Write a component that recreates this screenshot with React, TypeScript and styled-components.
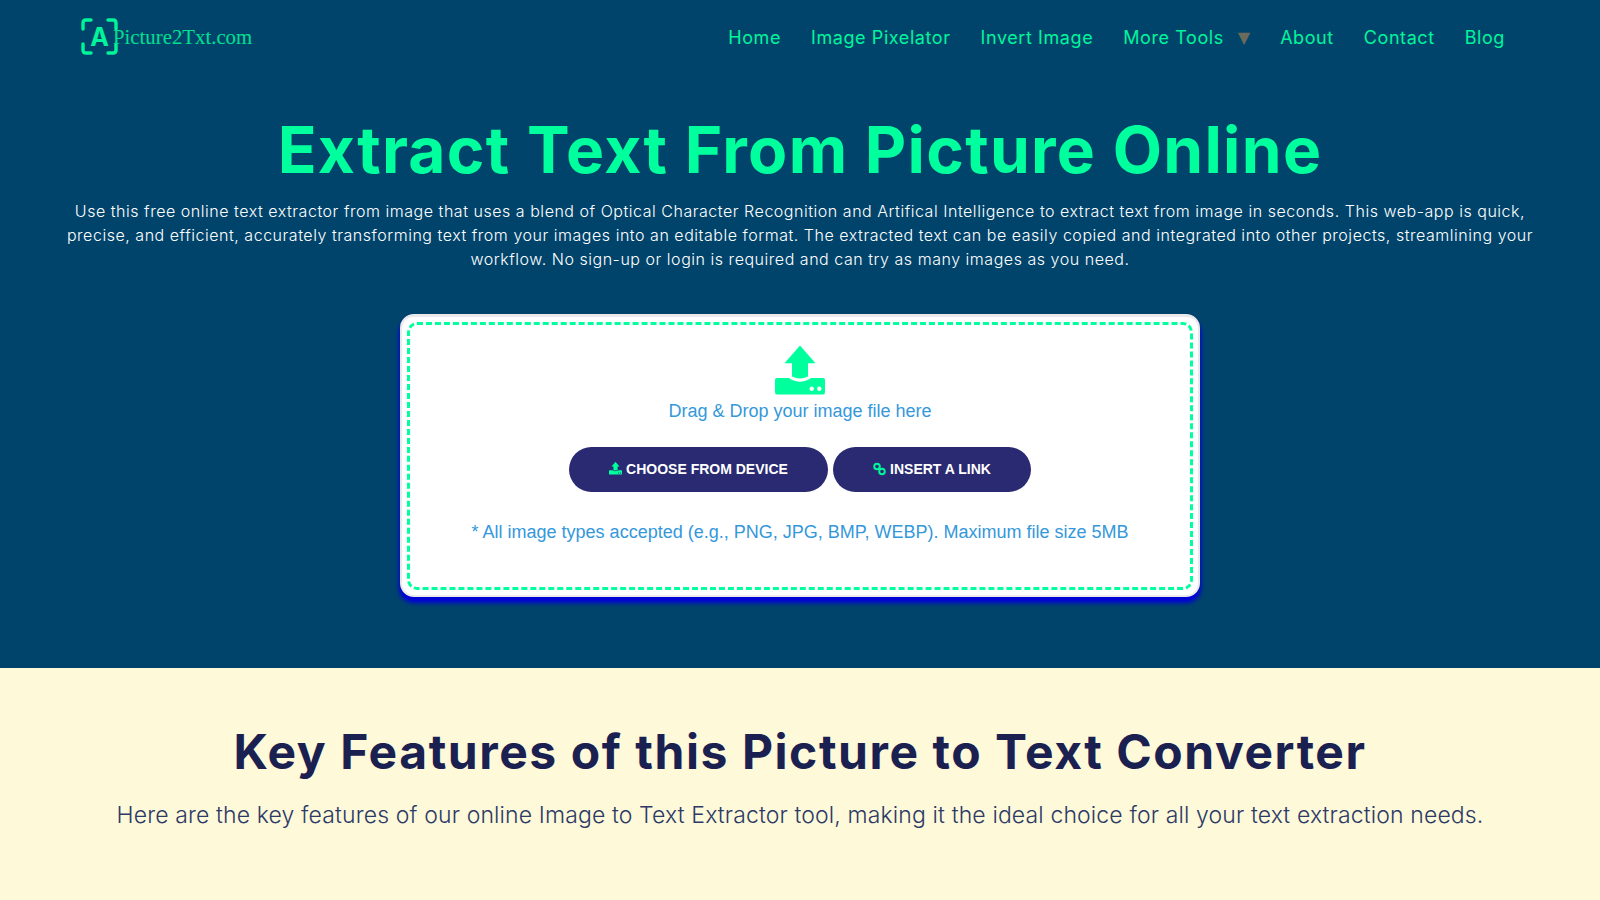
import React, { FC } from "react"
import styled, { createGlobalStyle } from "styled-components"

const navItems = ["Home", "Image Pixelator", "Invert Image", "More Tools", "About", "Contact", "Blog"]

const Logo: FC = () => (
  <LogoLink href="#">
    <svg width="37" height="37" viewBox="0 0 37 37" fill="none">
      <path
        d="M10 2H5Q2 2 2 5V11M27 2H32Q35 2 35 5V11M10 35H5Q2 35 2 32V26M27 35H32Q35 35 35 32V26"
        stroke="#00f59b"
        strokeWidth="3.4"
        strokeLinecap="round"
      />
      <LogoLetter x="18.5" y="27.5" textAnchor="middle">
        A
      </LogoLetter>
    </svg>
    <LogoText>Picture2Txt.com</LogoText>
  </LogoLink>
)

const UploadIcon: FC<{ size: number; dots: string }> = ({ size, dots }) => (
  <svg width={size} height={size} viewBox="0 0 50 50" fill="#00ff9d">
    <path d="M25 -0.5L40.5 17.3H33V30.5Q25 34.5 17 30.5V17.3H9.5Z" />
    <path d="M2 32H14Q25 39.5 36 32H48Q50 32 50 34V46Q50 48.5 48 48.5H2Q0 48.5 0 46V34Q0 32 2 32Z" />
    <circle cx="36.7" cy="42.7" r="2.2" fill={dots} />
    <circle cx="44.3" cy="42.7" r="2.2" fill={dots} />
  </svg>
)

const LinkIcon: FC = () => (
  <svg width="13" height="14" viewBox="0 0 13 14" fill="none" stroke="#00f59b" strokeWidth="2">
    <circle cx="4" cy="4.5" r="2.8" />
    <circle cx="9" cy="9.5" r="2.8" />
    <path d="M5.5 6L7.5 8" />
  </svg>
)

export default function App() {
  return (
    <>
      <GlobalStyle />
      <Hero>
        <Header>
          <Logo />
          <Nav>
            {navItems.map(item => (
              <NavItem key={item}>
                <NavLink href="#">{item}</NavLink>
                {item === "More Tools" && <Caret>▼</Caret>}
              </NavItem>
            ))}
          </Nav>
        </Header>

        <Title>Extract Text From Picture Online</Title>
        <Intro>
          Use this free online text extractor from image that uses a blend of Optical Character Recognition and
          Artifical Intelligence to extract text from image in seconds. This web-app is quick, precise, and efficient,
          accurately transforming text from your images into an editable format. The extracted text can be easily copied
          and integrated into other projects, streamlining your workflow. No sign-up or login is required and can try as
          many images as you need.
        </Intro>

        <Card>
          <DropZone>
            <UploadIcon size={50} dots="#fff" />
            <DropText>Drag &amp; Drop your image file here</DropText>
            <Buttons>
              <PillButton wide>
                <UploadIcon size={13} dots="#2a2a72" />
                Choose from device
              </PillButton>
              <PillButton>
                <LinkIcon />
                Insert a link
              </PillButton>
            </Buttons>
            <Note>* All image types accepted (e.g., PNG, JPG, BMP, WEBP). Maximum file size 5MB</Note>
          </DropZone>
        </Card>
      </Hero>

      <Features>
        <FeaturesTitle>Key Features of this Picture to Text Converter</FeaturesTitle>
        <FeaturesText>
          Here are the key features of our online Image to Text Extractor tool, making it the ideal choice for all your
          text extraction needs.
        </FeaturesText>
      </Features>
    </>
  )
}

//---------------------------STYLES-------------------------------------------//

const GlobalStyle = createGlobalStyle`
  html, body {
    margin: 0;
    height: 100%;
    overflow: hidden;
  }
  body {
    font-family: "Inter", "Liberation Sans", sans-serif;
    background: #fef9d9;
  }
  * {
    box-sizing: border-box;
  }
`

const Hero = styled.section`
  height: 668px;
  background: #00446c;
  display: flex;
  flex-direction: column;
  align-items: center;
`

const Header = styled.header`
  width: 100%;
  height: 75px;
  padding: 0 95px 0 81px;
  display: flex;
  align-items: center;
  justify-content: space-between;
`

const LogoLink = styled.a`
  display: flex;
  align-items: center;
  text-decoration: none;
  margin-top: -3px;
`

const LogoLetter = styled.text`
  font-family: "Inter", sans-serif;
  font-size: 25px;
  font-weight: 700;
  fill: #00f59b;
`

const LogoText = styled.span`
  margin: 2px 0 0 -5px;
  font-family: "Liberation Serif", serif;
  font-size: 20.8px;
  color: #00e08f;
`

const Nav = styled.nav`
  display: flex;
  align-items: center;
  gap: 30px;
`

const NavItem = styled.div`
  display: flex;
  align-items: center;
  gap: 14px;
`

const NavLink = styled.a`
  font-size: 18px;
  letter-spacing: 0.58px;
  color: #00f59b;
  text-decoration: none;
`

const Caret = styled.span`
  font-family: "DejaVu Sans", sans-serif;
  font-size: 16px;
  color: #6b6b5c;
`

const Title = styled.h1`
  margin: 27px 0 0;
  font-size: 64px;
  line-height: 96px;
  font-weight: 700;
  letter-spacing: 1.3px;
  color: #00ff9d;
`

const Intro = styled.p`
  margin: 1px 0 0;
  width: 1480px;
  font-size: 16px;
  line-height: 24px;
  font-weight: 300;
  letter-spacing: 0.53px;
  color: #fff;
  text-align: center;
`

const Card = styled.div`
  margin-top: 43px;
  width: 800px;
  height: 283px;
  padding: 5px;
  background: #fff;
  border: 2px solid #eaeaea;
  border-top-width: 3px;
  border-radius: 14px;
  box-shadow: 0 5px 4px 1px #0000d8;
`

const DropZone = styled.div`
  height: 100%;
  border: 3px dashed #00ff9d;
  border-radius: 10px;
  padding-top: 21px;
  display: flex;
  flex-direction: column;
  align-items: center;
  font-family: "Liberation Sans", sans-serif;
`

const DropText = styled.div`
  margin-top: 5px;
  font-size: 18px;
  line-height: 21px;
  color: #3498db;
`

const Buttons = styled.div`
  margin-top: 25px;
  display: flex;
  gap: 5px;
`

const PillButton = styled.button<{ wide?: boolean }>`
  width: ${props => (props.wide ? "259px" : "198px")};
  height: 45px;
  padding: 0 0 2px;
  border: none;
  border-radius: 25px;
  background: #2a2a72;
  color: #fff;
  font-family: "Liberation Sans", sans-serif;
  font-size: 14px;
  font-weight: 700;
  text-transform: uppercase;
  display: flex;
  align-items: center;
  justify-content: center;
  gap: 4px;
`

const Note = styled.div`
  margin-top: 30px;
  font-size: 18px;
  line-height: 21px;
  color: #3498db;
`

const Features = styled.section`
  height: 232px;
  padding-top: 48px;
  display: flex;
  flex-direction: column;
  align-items: center;
`

const FeaturesTitle = styled.h2`
  margin: 0;
  font-size: 48px;
  line-height: 72px;
  font-weight: 700;
  letter-spacing: 1.56px;
  color: #1a2151;
`

const FeaturesText = styled.p`
  margin: 9px 0 0;
  font-size: 23px;
  line-height: 36px;
  font-weight: 300;
  letter-spacing: 0.13px;
  color: #2d3a66;
`
